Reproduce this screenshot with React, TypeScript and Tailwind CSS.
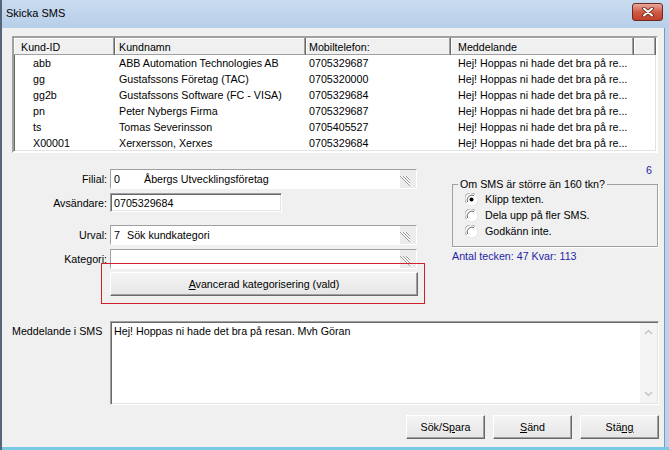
import React from "react";

const rows = [
  ["abb", "ABB Automation Technologies AB", "0705329687"],
  ["gg", "Gustafssons Företag (TAC)", "0705320000"],
  ["gg2b", "Gustafssons Software (FC - VISA)", "0705329684"],
  ["pn", "Peter Nybergs Firma", "0705329687"],
  ["ts", "Tomas Severinsson", "0705405527"],
  ["X00001", "Xerxersson, Xerxes", "0705329684"],
];

const sunken =
  "border border-t-[#a0a0a0] border-l-[#a0a0a0] border-r-white border-b-white shadow-[inset_1px_1px_0_#696969,inset_-1px_-1px_0_#e3e3e3]";

function Grip() {
  return (
    <svg width="12" height="12" viewBox="0 0 12 12" className="absolute right-[5px] bottom-[1px]">
      <path d="M1 1 L11 11 M4 1 L11 8 M7 1 L11 5" stroke="#9a9a9a" strokeWidth="1" />
      <path d="M2 1 L11 10 M5 1 L11 7 M8 1 L11 4" stroke="#ffffff" strokeWidth="1" />
    </svg>
  );
}

function Combo({ children }: { children?: React.ReactNode }) {
  return (
    <div className={`relative flex h-[20px] w-[307px] ${sunken}`}>
      <div className="flex-1 bg-white flex items-center pl-[3px] whitespace-pre">{children}</div>
      <div className="w-[16px] bg-[#ececec]" />
      <Grip />
    </div>
  );
}

function Radio({ checked }: { checked?: boolean }) {
  return (
    <svg width="13" height="13" viewBox="0 0 13 13">
      <circle cx="6.5" cy="6.5" r="6" fill="#ffffff" />
      <path d="M1.5 10 A6 6 0 0 1 10 1.5" stroke="#a0a0a0" strokeWidth="1" fill="none" />
      <path d="M2.6 9 A4.8 4.8 0 0 1 9 2.6" stroke="#696969" strokeWidth="1" fill="none" />
      <path d="M11.5 3 A6 6 0 0 1 3 11.5" stroke="#e3e3e3" strokeWidth="1" fill="none" />
      {checked && <circle cx="6.5" cy="6.5" r="2" fill="#000000" />}
    </svg>
  );
}

function Btn({ children, className = "" }: { children: React.ReactNode; className?: string }) {
  return (
    <div
      className={`h-[24px] flex items-center justify-center bg-gradient-to-b from-[#f4f4f4] to-[#e6e6e6] border border-t-white border-l-white border-r-[#696969] border-b-[#696969] shadow-[inset_-1px_-1px_0_#a0a0a0] ${className}`}
    >
      {children}
    </div>
  );
}

function ListView() {
  const cols = "grid grid-cols-[101px_191px_145px_183px_1fr]";
  const head = "h-[17px] flex items-center bg-[#f0f0f0] border-r border-r-[#696969] shadow-[inset_-1px_-1px_0_#a0a0a0,inset_1px_1px_0_#ffffff]";
  return (
    <div className={`w-[646px] h-[117px] bg-white ${sunken} border-2 p-0`}>
      <div className={cols}>
        <div className={`${head} pl-[7px]`}>Kund-ID</div>
        <div className={`${head} pl-[4px]`}>Kundnamn</div>
        <div className={`${head} pl-[3px]`}>Mobiltelefon:</div>
        <div className={`${head} pl-[7px]`}>Meddelande</div>
        <div className={`${head}`} />
      </div>
      {rows.map((r) => (
        <div key={r[0]} className={`${cols} h-[16px] items-center`}>
          <div className="pl-[19px]">{r[0]}</div>
          <div className="pl-[4px]">{r[1]}</div>
          <div className="pl-[3px]">{r[2]}</div>
          <div className="pl-[7px] whitespace-nowrap">Hej! Hoppas ni hade det bra på re...</div>
          <div />
        </div>
      ))}
    </div>
  );
}

export default function App() {
  return (
    <div className="w-[669px] h-[450px] flex flex-col bg-[#bcd3ec] border-l-2 border-l-[#56667a] font-['Liberation_Sans',Arial,sans-serif] text-[10.7px] leading-[12px] text-black overflow-hidden">
      {/* Title bar */}
      <div className="h-[28px] flex items-start justify-between pl-[4px] pr-[6px] bg-gradient-to-b from-[#c8dbf0] to-[#b8cfe9]">
        <div className="mt-[7px] text-[11px]">Skicka SMS</div>
        <div className="mt-[3px] w-[31px] h-[18px] rounded-[3px] border border-[#6b2b22] bg-gradient-to-b from-[#e9a89c] via-[#d05a45] to-[#c0402b] flex items-center justify-center">
          <svg width="12" height="10" viewBox="0 0 12 10">
            <path d="M2 1.5 L10 8.5 M10 1.5 L2 8.5" stroke="#5a2218" strokeWidth="3.6" strokeLinecap="round" />
            <path d="M2 1.5 L10 8.5 M10 1.5 L2 8.5" stroke="#ffffff" strokeWidth="2" strokeLinecap="round" />
          </svg>
        </div>
      </div>

      <div className="flex-1 flex">
        {/* Client area */}
        <div className="w-[662px] bg-[#f0f0f0] flex flex-col pl-[10px] pt-[8px]">
          <ListView />

          <div className="flex">
            {/* Left form */}
            <div className="relative w-[413px] pt-[16px]">
              <div className="flex items-center">
                <div className="w-[95px] text-right">Filial:</div>
                <div className="ml-[3px]">
                  <Combo>
                    <span className="w-[30px]">0</span>
                    <span>Åbergs Utvecklingsföretag</span>
                  </Combo>
                </div>
              </div>
              <div className="flex items-center mt-[4px]">
                <div className="w-[95px] text-right">Avsändare:</div>
                <div className={`ml-[3px] h-[19px] w-[172px] bg-white flex items-center pl-[3px] ${sunken}`}>0705329684</div>
              </div>
              <div className="flex items-center mt-[13px]">
                <div className="w-[95px] text-right">Urval:</div>
                <div className="ml-[3px]">
                  <Combo>
                    <span className="w-[13px]">7</span>
                    <span>Sök kundkategori</span>
                  </Combo>
                </div>
              </div>
              <div className="flex items-center mt-[4px]">
                <div className="w-[95px] text-right">Kategori:</div>
                <div className="ml-[3px]">
                  <Combo />
                </div>
              </div>
              <Btn className="mt-[3px] ml-[98px] w-[308px]">
                <span>
                  <span className="underline">A</span>vancerad kategorisering (vald)
                </span>
              </Btn>
              <div className="absolute left-[89px] top-[110px] w-[324px] h-[41px] border border-[#d0202a]" />
            </div>

            {/* Right side */}
            <div className="ml-[27px] w-[206px] pt-[11px]">
              <div className="text-right pr-[6px] text-[#1f1fa6]">6</div>
              <fieldset className="mt-[1px] border border-[#a0a0a0] shadow-[1px_1px_0_#ffffff] pb-[7px]">
                <legend className="ml-[5px] px-[2px] leading-[14px]">Om SMS är större än 160 tkn?</legend>
                <div className="h-[16px] flex items-center pl-[12px] gap-[7px]">
                  <Radio checked />
                  <span>Klipp texten.</span>
                </div>
                <div className="h-[16px] flex items-center pl-[12px] gap-[7px]">
                  <Radio />
                  <span>Dela upp på fler SMS.</span>
                </div>
                <div className="h-[16px] flex items-center pl-[12px] gap-[7px]">
                  <Radio />
                  <span>Godkänn inte.</span>
                </div>
              </fieldset>
              <div className="mt-[3px] text-[#1f1fa6]">Antal tecken: 47 Kvar: 113</div>
            </div>
          </div>

          {/* Message */}
          <div className="flex mt-[25px]">
            <div className="w-[98px] pt-[4px]">Meddelande i SMS</div>
            <div className={`w-[549px] h-[84px] bg-white flex ${sunken}`}>
              <div className="flex-1 pl-[3px] pt-[3px]">Hej! Hoppas ni hade det bra på resan. Mvh Göran</div>
              <div className="w-[17px] my-[1px] mr-[1px] bg-[#f4f4f4] flex flex-col justify-between items-center py-[6px]">
                <svg width="9" height="6" viewBox="0 0 9 6">
                  <path d="M1 5 L4.5 1.5 L8 5" stroke="#c4c4c4" strokeWidth="1.5" fill="none" />
                </svg>
                <svg width="9" height="6" viewBox="0 0 9 6">
                  <path d="M1 1 L4.5 4.5 L8 1" stroke="#c4c4c4" strokeWidth="1.5" fill="none" />
                </svg>
              </div>
            </div>
          </div>

          {/* Buttons */}
          <div className="flex justify-end gap-[8px] mt-[10px] pr-[5px]">
            <Btn className="w-[79px]">
              <span>
                S&ouml;k/S<span className="underline">p</span>ara
              </span>
            </Btn>
            <Btn className="w-[79px]">
              <span>
                <span className="underline">S</span>änd
              </span>
            </Btn>
            <Btn className="w-[79px]">
              <span>
                Stä<span className="underline">ng</span>
              </span>
            </Btn>
          </div>
        </div>

        {/* Right frame */}
        <div className="w-[5px] border-l border-l-[#7d98b8] bg-[#bcd3ec]" />
      </div>
      <div className="h-[3px] bg-[#79c9e6]" />
    </div>
  );
}
